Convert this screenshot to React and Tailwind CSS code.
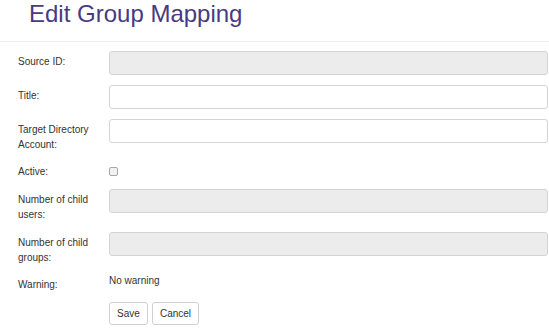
export default function App() {
  const rows = [
    { label: 'Source ID:', kind: 'disabled' },
    { label: 'Title:', kind: 'input' },
    { label: 'Target Directory Account:', kind: 'input' },
    { label: 'Active:', kind: 'checkbox' },
    { label: 'Number of child users:', kind: 'disabled' },
    { label: 'Number of child groups:', kind: 'disabled' },
    { label: 'Warning:', kind: 'text' },
  ];

  return (
    <div className="w-[549px] h-[331px] overflow-hidden bg-white text-[#333] font-['Liberation_Sans',Arial,sans-serif]">
      <h1 className="pl-[29px] pt-[1px] h-[41px] text-[24px] leading-[26px] text-[#4a3a80]">
        Edit Group Mapping
      </h1>
      <div className="border-t border-[#eeeeee]" />

      <form className="pl-[18px] pr-[1px] pt-[9px] flex flex-col gap-[10px]">
        {rows.map((row) => (
          <div key={row.label} className="flex">
            <label
              className={
                'w-[91px] shrink-0 pr-[12px] text-[10px] leading-[15px] ' +
                (row.kind === 'checkbox' ? 'pt-[2px]' : row.kind === 'text' ? 'pt-[2px]' : 'pt-[3px]')
              }
            >
              {row.label}
            </label>
            <div className="flex-1">
              {row.kind === 'disabled' && (
                <div className="h-[24px] rounded-[3px] border border-[#d4d4d4] bg-[#ececec]" />
              )}
              {row.kind === 'input' && (
                <div className="h-[24px] rounded-[3px] border border-[#d4d4d4] bg-white" />
              )}
              {row.kind === 'checkbox' && (
                <div className="pt-[5px]">
                  <div className="w-[9px] h-[9px] rounded-[2px] border border-[#a8a8a8] bg-[#f2f2f2]" />
                </div>
              )}
              {row.kind === 'text' && (
                <p className="text-[10px] leading-[12px]">No warning</p>
              )}
            </div>
          </div>
        ))}

        <div className="flex gap-[4px] pl-[91px]">
          <button type="button" className="w-[39px] h-[23px] rounded-[3px] border border-[#d0d0d0] bg-white text-[10px] text-[#333]">
            Save
          </button>
          <button type="button" className="w-[47px] h-[23px] rounded-[3px] border border-[#d0d0d0] bg-white text-[10px] text-[#333]">
            Cancel
          </button>
        </div>
      </form>
    </div>
  );
}
